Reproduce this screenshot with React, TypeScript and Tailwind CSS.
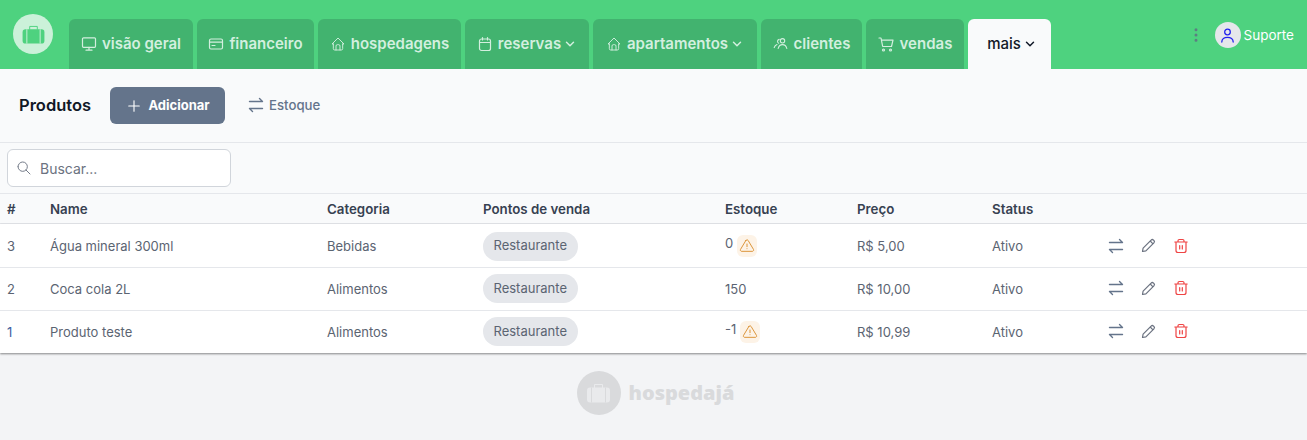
import React from "react";
import { TbChevronDown, TbPlus, TbSearch, TbDotsVertical, TbHome, TbAlertTriangle } from "react-icons/tb";

const Exchange = ({ size = 16 }: { size?: number }) => (
  <svg width={size} height={size} viewBox="0 0 16 16" fill="none" stroke="currentColor" strokeWidth="1.4" strokeLinecap="round" strokeLinejoin="round"><path d="M1.500 4.500h13L11.500 1.500M14.500 11.500h-13L4.500 14.500" /></svg>
);
const Monitor = () => (
  <svg width="16" height="16" viewBox="0 0 16 16" fill="none" stroke="currentColor" strokeWidth="1.200" strokeLinecap="round" strokeLinejoin="round"><rect x="1.500" y="1.800" width="13" height="9.500" rx="1" /><path d="M8 11.300v2.700M5 14.200h6" /></svg>
);
const Calendar = () => (
  <svg width="16" height="16" viewBox="0 0 16 16" fill="none" stroke="currentColor" strokeWidth="1.200" strokeLinecap="round" strokeLinejoin="round"><rect x="2.500" y="3" width="11" height="11.500" rx="2" /><path d="M2.500 6.500h11M5.500 1.500v2.500M10.500 1.500v2.500" /></svg>
);
const Cart = () => (
  <svg width="17" height="17" viewBox="0 0 17 17" fill="none" stroke="currentColor" strokeWidth="1.200" strokeLinecap="round" strokeLinejoin="round"><path d="M1 2h2l1.700 8.500h8.800L15 4.200H3.500" /><circle cx="5.500" cy="14" r="1" /><circle cx="12.500" cy="14" r="1" /></svg>
);
const UserIcon = () => (
  <svg width="17" height="17" viewBox="0 0 17 17" fill="none" stroke="#2222ee" strokeWidth="1.300" strokeLinecap="round"><circle cx="8.500" cy="5" r="2.800" /><path d="M2.800 15c0-3 2.400-4.700 5.700-4.700s5.700 1.700 5.700 4.700" /></svg>
);
const Card = () => (
  <svg width="16" height="16" viewBox="0 0 16 16" fill="none" stroke="currentColor" strokeWidth="1.200" strokeLinejoin="round" strokeLinecap="round"><rect x="1.500" y="3" width="13" height="10" rx="1.500" /><path d="M1.500 6.200h13M4 9.500h3" /></svg>
);
const People = () => (
  <svg width="16" height="16" viewBox="0 0 16 16" fill="none" stroke="currentColor" strokeWidth="1.100" strokeLinecap="round"><circle cx="9.500" cy="4.800" r="2.200" /><path d="M5.200 12.500c.6-2.600 2.200-3.900 4.300-3.900s3.700 1.300 4.300 3.900" /><path d="M6.200 3.400a2 2 0 0 0-.5 3.800M4 8.600c-1.300.5-2.300 1.500-2.800 3" /></svg>
);
const Pencil = () => (
  <svg width="17" height="17" viewBox="0 0 17 17" fill="none" stroke="currentColor" strokeWidth="1.200" strokeLinejoin="round"><path d="M2.500 14.500l.6-3.400 8-8a1.700 1.700 0 0 1 2.400 0l.4.400a1.700 1.700 0 0 1 0 2.400l-8 8z" /><path d="M10.200 4l2.800 2.800" /></svg>
);
const Trash = () => (
  <svg width="16" height="16" viewBox="0 0 16 16" fill="none" stroke="currentColor" strokeWidth="1.200" strokeLinecap="round" strokeLinejoin="round"><path d="M1.800 4h12.400M5 4V2.800A1.300 1.300 0 0 1 6.300 1.500h3.400A1.300 1.300 0 0 1 11 2.800V4M3 4v8.500A2 2 0 0 0 5 14.500h6a2 2 0 0 0 2-2V4M6.700 7.500v3.500M9.300 7.500v3.500" /></svg>
);
const Case = ({ body, gap, w, h }: { body: string; gap: string; w: number; h: number }) => (
  <svg width={w} height={h} viewBox="0 0 24 20"><path d="M8 5V1.500h8V5" fill="none" stroke={body} strokeWidth="1" /><rect x="0.500" y="4.500" width="23" height="15" rx="3" fill={body} /><path d="M5 4.500v15M19 4.500v15" stroke={gap} strokeWidth="1" /></svg>
);

const tabs: [string, number, React.ReactNode, boolean][] = [
  ["visão geral", 124, <Monitor />, false],
  ["financeiro", 117, <Card />, false],
  ["hospedagens", 143, <TbHome size={16} strokeWidth={1.4} />, false],
  ["reservas", 124, <Calendar />, true],
  ["apartamentos", 164, <TbHome size={16} strokeWidth={1.4} />, true],
  ["clientes", 101, <People />, false],
  ["vendas", 98, <Cart />, false],
];

const grid = "grid grid-cols-[43px_277px_156px_242px_132px_135px_116px_1fr] items-center pl-[7px]";
const rows: [string, string, string, string, string, boolean, string, string][] = [
  ["3", "Água mineral 300ml", "Bebidas", "0", "R$ 5,00", true, "text-[#5b6472]", "h-[44px] border-b border-[#e5e7eb] pt-[3px]"],
  ["2", "Coca cola 2L", "Alimentos", "150", "R$ 10,00", false, "text-[#5b6472]", "h-[43px] border-b border-[#e5e7eb] pt-px"],
  ["1", "Produto teste", "Alimentos", "-1", "R$ 10,99", true, "text-[#3f5f9f]", "h-[42px] pt-px"],
];

export default function App() {
  return (
    <div className="w-[1307px] h-[440px] overflow-hidden bg-[#f3f4f6] font-['Inter',sans-serif] flex flex-col">
      <header className="h-[69px] shrink-0 bg-[#4ed27f] flex items-end">
        <div className="w-[69px] h-[69px] shrink-0 pl-[13px] pt-[14px]">
          <div className="w-10 h-10 rounded-full bg-[#cbf1d9] flex items-center justify-center">
            <Case body="#4ed27f" gap="#cbf1d9" w={23} h={19} />
          </div>
        </div>
        <nav className="flex gap-1 h-[50px]">
          {tabs.map(([label, w, icon, chev]) => (
            <div key={label} style={{ width: w }} className="h-full rounded-t-md bg-[#42b36f] text-[#d3efdf] flex items-center justify-center gap-[5px] text-[15px] font-semibold">
              {icon}
              <span className="flex items-center gap-0.5">{label}{chev && <TbChevronDown size={14} strokeWidth={2.5} />}</span>
            </div>
          ))}
          <div className="w-[83px] h-full rounded-t-md bg-[#f9fafb] text-[#111827] flex items-center justify-center gap-0.5 pl-[5px] text-[15px] font-medium">
            mais <TbChevronDown size={14} strokeWidth={2.5} />
          </div>
        </nav>
        <div className="ml-auto self-start mt-[22px] mr-[13px] flex items-center">
          <TbDotsVertical size={18} className="text-[#5c7f82] mr-[10px]" />
          <div className="w-[26px] h-[26px] rounded-full bg-[#e5e7eb] flex items-center justify-center mr-[3px]">
            <UserIcon />
          </div>
          <span className="text-[13.500px] text-white">Suporte</span>
        </div>
      </header>

      <section className="h-[74px] shrink-0 bg-[#f9fafb] border-b border-[#e5e7eb] flex items-center pl-[19px] pb-px">
        <h1 className="text-[16.500px] font-semibold text-[#111827] w-[91px]">Produtos</h1>
        <button className="w-[115px] h-[37px] rounded-md bg-[#64748b] text-white text-[13px] font-bold flex items-center justify-center gap-[5px] pt-px">
          <TbPlus size={18} strokeWidth={1.5} /> Adicionar
        </button>
        <div className="ml-[23px] flex items-center gap-[5px] text-[13.200px] font-medium text-[#64748b] pt-px">
          <Exchange /> Estoque
        </div>
      </section>

      <section className="h-[51px] shrink-0 bg-[#f9fafb] border-b border-[#e5e7eb] pl-[7px] pt-[6px]">
        <div className="w-[224px] h-[38px] rounded-md border border-[#d1d5db] bg-white flex items-center pl-[8px] gap-[8px] text-[14px] text-[#6b7280]">
          <TbSearch size={16} strokeWidth={1.4} /> Buscar...
        </div>
      </section>

      <div className={`${grid} h-[30px] shrink-0 bg-[#f9fafb] border-b border-[#e5e7eb] pt-[2px] text-[13.300px] font-semibold text-[#374151]`}>
        <span>#</span><span>Name</span><span>Categoria</span><span>Pontos de venda</span><span>Estoque</span><span>Preço</span><span>Status</span><span />
      </div>

      <div className="bg-white shadow-[0_1px_2px_rgba(0,0,0,0.45)] shrink-0">
        {rows.map(([id, name, cat, stock, price, warn, idc, rowc]) => (
          <div key={id} className={`${grid} text-[13px] text-[#5b6472] ${rowc}`}>
            <span className={idc}>{id}</span>
            <span>{name}</span>
            <span>{cat}</span>
            <span className="-mt-[2px]"><span className="inline-flex h-[29px] px-[10.500px] items-center rounded-full bg-[#e5e7eb] text-[#5b6472]">Restaurante</span></span>
            <span className="flex items-center gap-1">
              <span className={warn ? "-mt-[6px]" : ""}>{stock}</span>
              {warn && <span className="w-5 h-[22px] -mt-[2px] rounded-md bg-[#fdf3e7] flex items-center justify-center text-[#d98e2e]"><TbAlertTriangle size={16} strokeWidth={1.4} /></span>}
            </span>
            <span>{price}</span>
            <span>Ativo</span>
            <span className="flex items-center gap-[16px] -mt-[3px] text-[#64748b]">
              <Exchange />
              <span className="text-[#6b7280]"><Pencil /></span>
              <span className="text-[#ef4444]"><Trash /></span>
            </span>
          </div>
        ))}
      </div>

      <footer className="flex justify-center pt-[18px]">
        <div className="flex items-center gap-[8px] pl-[4px]">
          <div className="w-[44px] h-[44px] rounded-full bg-[#d9dadc] flex items-center justify-center">
            <Case body="#e9eaec" gap="#d9dadc" w={25} h={20} />
          </div>
          <span className="font-['Open_Sans',sans-serif] text-[20px] font-extrabold text-[#d9dadc]">hospedajá</span>
        </div>
      </footer>
    </div>
  );
}
